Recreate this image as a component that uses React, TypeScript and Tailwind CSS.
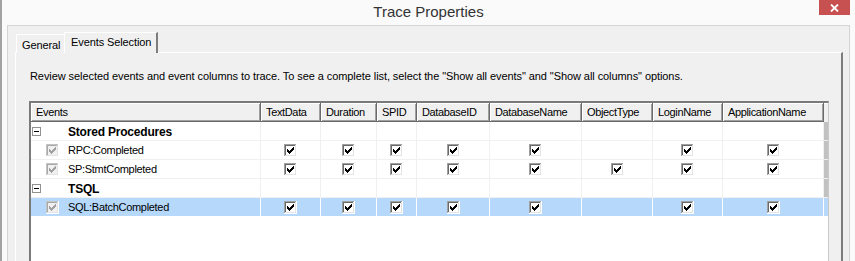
import React from "react";

type Col = { name: string; w: string };

const cols: Col[] = [
  { name: "TextData", w: "w-[60px]" },
  { name: "Duration", w: "w-[56px]" },
  { name: "SPID", w: "w-[40px]" },
  { name: "DatabaseID", w: "w-[73px]" },
  { name: "DatabaseName", w: "w-[92px]" },
  { name: "ObjectType", w: "w-[71px]" },
  { name: "LoginName", w: "w-[70px]" },
  { name: "ApplicationName", w: "w-[101px]" },
];

type Row =
  | { kind: "group"; label: string }
  | { kind: "event"; label: string; checks: number[]; selected?: boolean };

const rows: Row[] = [
  { kind: "group", label: "Stored Procedures" },
  { kind: "event", label: "RPC:Completed", checks: [1, 1, 1, 1, 1, 0, 1, 1] },
  { kind: "event", label: "SP:StmtCompleted", checks: [1, 1, 1, 1, 1, 1, 1, 1] },
  { kind: "group", label: "TSQL" },
  { kind: "event", label: "SQL:BatchCompleted", checks: [1, 1, 1, 1, 1, 0, 1, 1], selected: true },
];

const tick =
  "M3 5h1v3h-1z M4 6h1v3h-1z M5 7h1v3h-1z M6 6h1v3h-1z M7 5h1v3h-1z M8 4h1v3h-1z M9 3h1v3h-1z";

function CheckBox({ disabled = false }: { disabled?: boolean }) {
  return (
    <svg width="13" height="13" viewBox="0 0 13 13" shapeRendering="crispEdges" className="block">
      <rect x="0" y="0" width="13" height="13" fill="#ffffff" />
      <rect x="0" y="0" width="12" height="1" fill={disabled ? "#c4c4c4" : "#a0a0a0"} />
      <rect x="0" y="0" width="1" height="12" fill={disabled ? "#c4c4c4" : "#a0a0a0"} />
      <rect x="1" y="1" width="10" height="1" fill={disabled ? "#a8a8a8" : "#696969"} />
      <rect x="1" y="1" width="1" height="10" fill={disabled ? "#a8a8a8" : "#696969"} />
      <rect x="1" y="11" width="11" height="1" fill="#e3e3e3" />
      <rect x="11" y="1" width="1" height="11" fill="#e3e3e3" />
      <rect x="2" y="2" width="9" height="9" fill={disabled ? "#f0f0f0" : "#ffffff"} />
      <path d={tick} fill={disabled ? "#a0a0a0" : "#000000"} />
    </svg>
  );
}

function Expander() {
  return (
    <svg width="9" height="9" viewBox="0 0 9 9" shapeRendering="crispEdges" className="block">
      <rect x="0.5" y="0.5" width="8" height="8" fill="#ffffff" stroke="#919191" />
      <rect x="2" y="4" width="5" height="1" fill="#000000" />
    </svg>
  );
}

const headShadow =
  "shadow-[inset_-1px_-1px_0_#696969,inset_1px_1px_0_#ffffff,inset_-2px_-2px_0_#a0a0a0]";

export default function App() {
  return (
    <div className="w-[855px] h-[261px] overflow-hidden flex flex-col bg-[#fafafa] border-l-2 border-[#a3a3a3] font-['Liberation_Sans',Arial,sans-serif] text-[11px] text-black">
      {/* title bar */}
      <div className="h-[25px] shrink-0 grid grid-cols-[1fr_auto_1fr]">
        <div />
        <div className="text-[15px] leading-[23px] text-[#333333]">Trace Properties</div>
        <div className="flex justify-end pr-[5px]">
          <div className="w-[31px] h-[15px] bg-[#c75050] flex items-center justify-center">
            <svg width="9" height="8" viewBox="0 0 9 8">
              <path d="M1 0.5 L8 7.5 M8 0.5 L1 7.5" stroke="#ffffff" strokeWidth="1.8" />
            </svg>
          </div>
        </div>
      </div>

      {/* window frame + client */}
      <div className="flex-1 flex pl-[5px] pr-[5px]">
        <div className="flex-1 flex flex-col bg-[#f0f0f0] border-t border-l border-r border-[#d4d4d4] pl-[7px] pt-[7px] pr-[6px]">
          {/* tabs */}
          <div className="h-[20px] flex items-end pl-[1px] -mb-[1px] relative z-10">
            <div className="h-[19px] w-[48px] border-t border-l border-white bg-[#f0f0f0] pl-[5px] pt-[3px] leading-[14px] tracking-[-0.1px]">
              General
            </div>
            <div className="h-[21px] w-[94px] border-t border-l border-white border-r-2 border-r-[#7d7d7d] bg-[#f0f0f0] pl-[6px] pt-[2px] leading-[14px] tracking-[-0.1px]">
              Events Selection
            </div>
          </div>

          {/* tab page */}
          <div className="flex-1 flex flex-col border-t border-l border-white border-r-2 border-r-[#7d7d7d] pl-[13px] pr-[12px] pt-[17px]">
            <div className="pl-[1px] leading-[13px] mb-[18px] tracking-[-0.075px] whitespace-nowrap">
              Review selected events and event columns to trace. To see a complete list, select the "Show all events" and "Show all columns" options.
            </div>

            {/* grid */}
            <div className="flex-1 flex flex-col bg-white border-t-2 border-l-2 border-[#7a7a7a] border-r border-r-[#c8c8c8]">
              <div className="h-[19px] flex tracking-[-0.35px]">
                <div className={`w-[230px] h-full bg-[#f0f0f0] pl-[5px] leading-[18px] ${headShadow}`}>Events</div>
                {cols.map((c) => (
                  <div key={c.name} className={`${c.w} h-full bg-[#f0f0f0] pl-[5px] leading-[18px] whitespace-nowrap ${headShadow}`}>
                    {c.name}
                  </div>
                ))}
                <div className="w-[4px] h-full bg-[#f0f0f0] border-t border-white" />
              </div>

              {rows.map((r, i) => {
                const sel = r.kind === "event" && r.selected;
                const line = sel ? "border-white" : "border-[#f0f0f0]";
                return (
                  <div key={i} className={`h-[19px] flex border-b ${line} ${sel ? "bg-[#b5d8fb]" : ""}`}>
                    <div className={`w-[230px] h-full border-r ${line} flex items-center`}>
                      {r.kind === "group" ? (
                        <>
                          <div className="ml-[1px]">
                            <Expander />
                          </div>
                          <div className="ml-[27px] font-bold text-[12px] tracking-[-0.2px] pt-[1px]">{r.label}</div>
                        </>
                      ) : (
                        <>
                          <div className="ml-[15px]">
                            <CheckBox disabled />
                          </div>
                          <div className="ml-[9px] tracking-[-0.3px]">{r.label}</div>
                        </>
                      )}
                    </div>
                    {cols.map((c, j) => (
                      <div key={c.name} className={`${c.w} h-full border-r ${line} flex items-center justify-center`}>
                        {r.kind === "event" && r.checks[j] ? <CheckBox /> : null}
                      </div>
                    ))}
                    <div className={`w-[4px] h-full ${sel ? "" : "bg-[#c1c1c1]"}`} />
                  </div>
                );
              })}
            </div>
          </div>
        </div>
      </div>
    </div>
  );
}
